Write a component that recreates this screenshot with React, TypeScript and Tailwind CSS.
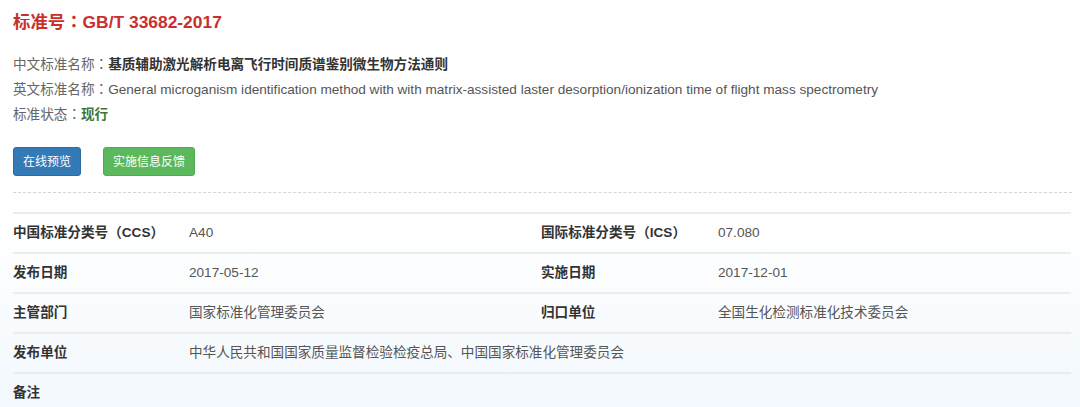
const ROWS: { label: string; value: string; label2?: string; value2?: string }[] = [
  { label: "中国标准分类号（CCS）", value: "A40", label2: "国际标准分类号（ICS）", value2: "07.080" },
  { label: "发布日期", value: "2017-05-12", label2: "实施日期", value2: "2017-12-01" },
  { label: "主管部门", value: "国家标准化管理委员会", label2: "归口单位", value2: "全国生化检测标准化技术委员会" },
  { label: "发布单位", value: "中华人民共和国国家质量监督检验检疫总局、中国国家标准化管理委员会" },
  { label: "备注", value: "" },
]

// centred full-width colon (SC font puts it to the left)
function Colon() {
  return <span className="leading-none [font-family:'Noto_Sans_CJK_TC',sans-serif]">：</span>
}

export default function App() {
  return (
    <div className="h-[407px] w-[1080px] overflow-hidden bg-gradient-to-b from-white from-55% to-[#f2f8fd] pl-[13px] pr-[8px] text-[13.6px] text-[#555] [font-family:'Liberation_Sans','Noto_Sans_CJK_SC',sans-serif]">
      <h1 className="pt-[9px] text-[17.4px] leading-[26px] font-bold text-[#c9302c]">
        标准号<Colon />GB/T 33682-2017
      </h1>

      {/* Info lines */}
      <div className="mt-[17px] leading-[25px]">
        <p>
          <span className="text-[#666]">中文标准名称<Colon /></span>
          <span className="font-bold text-[#333]">基质辅助激光解析电离飞行时间质谱鉴别微生物方法通则</span>
        </p>
        <p>
          <span className="text-[#666]">英文标准名称<Colon /></span>
          <span className="text-[#555]">
            General microganism identification method with with matrix-assisted laster desorption/ionization time of flight mass spectrometry
          </span>
        </p>
        <p>
          <span className="text-[#666]">标准状态<Colon /></span>
          <span className="font-bold text-[#3c763d]">现行</span>
        </p>
      </div>

      {/* Buttons */}
      <div className="mt-[20px] flex gap-[22px]">
        <button className="h-[29px] rounded-[3px] border border-[#2e6da4] bg-[#337ab7] px-[9px] text-[12px] text-white">
          在线预览
        </button>
        <button className="h-[29px] rounded-[3px] border border-[#4cae4c] bg-[#5cb85c] px-[9px] text-[12px] text-white">
          实施信息反馈
        </button>
      </div>

      <div className="mt-[16px] w-[1059px] border-t border-dashed border-[#d5d5d5]" />

      {/* Table */}
      <div className="mt-[19px] w-[1058px]">
        {ROWS.map((r) => (
          <div key={r.label} className="flex h-[40px] items-center border-t-2 border-[#ececec]">
            <div className="w-[176px] font-bold text-[#333]">{r.label}</div>
            <div className={r.label2 ? "w-[352px]" : "flex-1"}>{r.value}</div>
            {r.label2 && (
              <>
                <div className="w-[177px] font-bold text-[#333]">{r.label2}</div>
                <div className="flex-1">{r.value2}</div>
              </>
            )}
          </div>
        ))}
      </div>
    </div>
  )
}
